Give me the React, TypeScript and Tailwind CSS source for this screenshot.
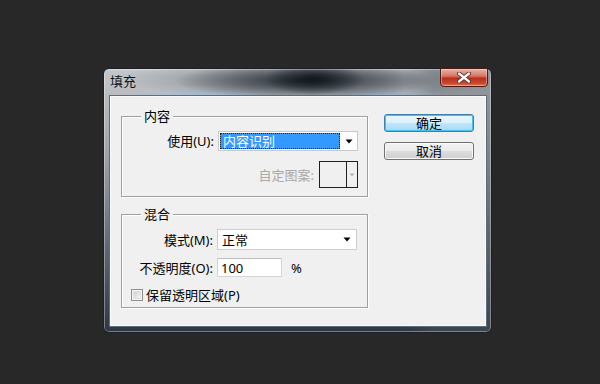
import React from "react";

function Arrow({ color = "#000" }: { color?: string }) {
  return (
    <svg width="8" height="5" viewBox="0 0 8 5">
      <path d="M0.5 0.5 L7.5 0.5 L4 4.5 Z" fill={color} />
    </svg>
  );
}

export default function App() {
  return (
    <div className="w-[600px] h-[384px] bg-[#282828] pl-[103px] pt-[68px] font-['Noto_Sans','Noto_Sans_CJK_SC',sans-serif] text-[13px] leading-[16px] text-black overflow-hidden">
      {/* window */}
      <div className="relative w-[389px] h-[265px] rounded-[6px] border border-[#1c2026] shadow-[inset_0_0_0_1px_rgba(255,255,255,0.35)] bg-[radial-gradient(ellipse_50px_16px_at_210px_10px,rgba(14,20,26,0.9),transparent),radial-gradient(ellipse_130px_18px_at_200px_12px,rgba(26,34,42,0.85),transparent),radial-gradient(ellipse_200px_20px_at_210px_10px,rgba(50,58,66,0.55),transparent),radial-gradient(ellipse_80px_5px_at_100px_25px,rgba(160,190,220,0.75),transparent),radial-gradient(ellipse_60px_5px_at_280px_25px,rgba(150,180,210,0.6),transparent),linear-gradient(90deg,transparent_0px,transparent_300px,rgba(80,86,94,0.4)_330px,rgba(80,86,94,0.4)_389px),linear-gradient(180deg,#c5c8cb_0px,#b8bcc0_27px,#9aa1a8_90px,#5e6771_180px,#2c3540_265px)] flex flex-col pl-[5px] pr-[4px] pt-[26px] pb-[5px]">
        {/* title */}
        <div className="absolute left-[6px] top-[4px] text-[13px] leading-[16px] text-[#111]">填充</div>
        {/* close button */}
        <div className="absolute right-[3px] top-[-1px] w-[48px] h-[19px] rounded-b-[4px] border border-[#4a1a14] bg-[linear-gradient(180deg,#e9b3a6_0%,#d67a66_40%,#b9301c_55%,#c84a30_85%,#e07a5c_100%)] shadow-[inset_0_0_0_1px_rgba(255,220,210,0.45)] flex items-center justify-center">
          <svg width="14" height="11" viewBox="0 0 14 11">
            <path d="M2 1.5 L12 9.5 M12 1.5 L2 9.5" stroke="#5a1e16" strokeWidth="4" strokeLinecap="round" />
            <path d="M2 1.5 L12 9.5 M12 1.5 L2 9.5" stroke="#ffffff" strokeWidth="2.4" strokeLinecap="round" />
          </svg>
        </div>
        {/* client area */}
        <div className="flex-1 border border-[#5e6b7a] bg-[#f0f0f0] shadow-[inset_0_0_0_1px_#fafafa] flex items-start pl-[11px] pt-[18px]">
          {/* left column */}
          <div className="w-[247px] mt-[2px] flex flex-col gap-[17px]">
            {/* group 内容 */}
            <div className="relative h-[81px] border border-[#a0a0a0] shadow-[1px_1px_0_#fff,inset_1px_1px_0_#fff] flex flex-col items-end pr-[9px] pt-[14px] gap-[10px]">
              <span className="absolute left-[19px] top-[-9px] bg-[#f0f0f0] px-[3px]">内容</span>
              <div className="flex items-center">
                <span className="mr-[4px]">使用(U):</span>
                <div className="w-[140px] h-[20px] bg-white border border-[#c8c8c8] flex items-center pl-[1px] pr-[4px]">
                  <div className="w-[120px] h-[16px] bg-[#3399ff] outline outline-1 outline-dotted outline-[#222] -outline-offset-1 text-white pl-[3px] leading-[16px]">
                    内容识别
                  </div>
                  <div className="flex-1 flex justify-end">
                    <Arrow />
                  </div>
                </div>
              </div>
              <div className="flex items-center">
                <span className="mr-[5px] text-[#a8a8a8]">自定图案:</span>
                <div className="w-[39px] h-[27px] border border-[#202020] bg-[#f0f0f0] flex">
                  <div className="w-[27px] border-r border-[#202020]" />
                  <div className="flex-1 flex items-center justify-center">
                    <svg width="6" height="4" viewBox="0 0 6 4">
                      <path d="M0.5 0.5 L5.5 0.5 L3 3.5 Z" fill="#b4b4b4" />
                    </svg>
                  </div>
                </div>
              </div>
            </div>
            {/* group 混合 */}
            <div className="relative h-[94px] border border-[#a0a0a0] shadow-[1px_1px_0_#fff,inset_1px_1px_0_#fff] flex flex-col pt-[14px]">
              <span className="absolute left-[19px] top-[-9px] bg-[#f0f0f0] px-[3px]">混合</span>
              <div className="flex items-center">
                <span className="w-[91px] text-right mr-[4px]">模式(M):</span>
                <div className="w-[140px] h-[21px] bg-white border border-[#cfcfcf] flex items-center pl-[4px] pr-[5px]">
                  <span className="flex-1">正常</span>
                  <Arrow />
                </div>
              </div>
              <div className="flex items-center mt-[8px]">
                <span className="w-[91px] text-right mr-[4px]">不透明度(O):</span>
                <div className="w-[65px] h-[19px] bg-white border border-[#d6d6d6] border-t-[#c0c0c0] flex items-center pl-[3px]">
                  100
                </div>
                <span className="ml-[9px]">%</span>
              </div>
              <div className="flex items-center mt-[10px] pl-[9px]">
                <div className="w-[12px] h-[12px] border border-[#8f8f8f] bg-[#f4f4f4] p-[1px]">
                  <div className="w-full h-full bg-[linear-gradient(135deg,#cfcfcf,#f6f6f6)] border border-[#e0e0e0]" />
                </div>
                <span className="ml-[3px]">保留透明区域(P)</span>
              </div>
            </div>
          </div>
          {/* buttons */}
          <div className="ml-[16px] flex flex-col gap-[10px]">
            <div className="w-[90px] h-[18px] rounded-[3px] border border-[#3c7fb1] bg-[linear-gradient(180deg,#eaf6fd_0%,#d9f0fc_50%,#bee6fd_51%,#a7d9f5_100%)] shadow-[inset_0_0_0_1px_#48c0f0] flex items-center justify-center leading-[14px]">
              确定
            </div>
            <div className="w-[90px] h-[18px] rounded-[3px] border border-[#707070] bg-[linear-gradient(180deg,#f2f2f2_0%,#ebebeb_50%,#dddddd_51%,#cfcfcf_100%)] shadow-[inset_0_0_0_1px_#fbfbfb] flex items-center justify-center leading-[14px]">
              取消
            </div>
          </div>
        </div>
      </div>
    </div>
  );
}
